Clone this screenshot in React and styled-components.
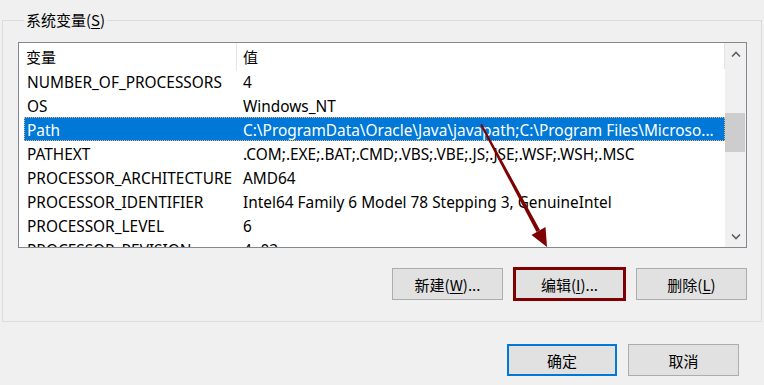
import React from "react";
import styled, { createGlobalStyle } from "styled-components";

const Global = createGlobalStyle`
  html, body { margin: 0; padding: 0; background: #f0f0f0; }
  body {
    width: 764px; height: 385px; overflow: hidden;
    font-family: "Noto Sans", "Noto Sans CJK SC", sans-serif;
    font-size: 15px; color: #000;
  }
`;

const Page = styled.div`
  position: relative;
  width: 764px;
  height: 385px;
  display: flex;
  flex-direction: column;
`;

const Group = styled.fieldset`
  margin: 10px 0 0 2px;
  width: 760px;
  box-sizing: border-box;
  height: 312px;
  padding: 12px 14px 0 15px;
  border: 1px solid #dcdcdc;
  display: flex;
  flex-direction: column;
  align-items: flex-start;
`;

const Legend = styled.legend`
  margin-left: 6px;
  padding: 0 2px 0 2px;
  line-height: 20px;
  font-family: "Noto Sans CJK SC", sans-serif;
  font-size: 15px;
`;

const U = styled.span`
  text-decoration: underline;
  text-underline-offset: 2px;
`;

const ListBox = styled.div`
  width: 729px;
  height: 206px;
  box-sizing: border-box;
  border: 1px solid #828790;
  background: #fff;
  display: flex;
  overflow: hidden;
`;

const ListContent = styled.div`
  flex: 1;
  display: flex;
  flex-direction: column;
  overflow: hidden;
`;

const Header = styled.div`
  flex: none;
  height: 26px;
  display: grid;
  grid-template-columns: 218px 1fr;
  border-right: 1px solid #e5e5e5;
`;

const HeadCell = styled.div`
  padding-left: ${p => p.$pad}px;
  line-height: 28px;
  font-family: "Noto Sans CJK SC", sans-serif;
  border-right: ${p => (p.$sep ? "1px solid #e5e5e5" : "none")};
`;

const Row = styled.div`
  flex: none;
  height: 24px;
  margin-left: 5px;
  box-sizing: border-box;
  display: grid;
  grid-template-columns: 213px 1fr;
  align-items: center;
  font-size: 15.4px;
  padding-top: 3px;
  background: ${p => (p.$sel ? "#0078d7" : "transparent")};
  color: ${p => (p.$sel ? "#fff" : "#000")};
  outline: ${p => (p.$sel ? "1px dotted #f3b36a" : "none")};
  outline-offset: -1px;
  white-space: nowrap;
`;

const Cell = styled.div`
  padding-left: ${p => p.$pad}px;
  overflow: hidden;
  white-space: nowrap;
`;

const Scrollbar = styled.div`
  flex: none;
  width: 21px;
  background: #f0f0f0;
  display: flex;
  flex-direction: column;
  align-items: center;
`;

const ArrowBtn = styled.div`
  flex: none;
  width: 21px;
  height: 21px;
  display: flex;
  align-items: center;
  justify-content: center;
`;

const Track = styled.div`
  flex: 1;
  width: 100%;
  display: flex;
  flex-direction: column;
`;

const Thumb = styled.div`
  margin: 49px 1px 0 0;
  width: 20px;
  height: 39px;
  background: #cdcdcd;
`;

const ButtonRow = styled.div`
  align-self: flex-end;
  margin: 20px 0 0 0;
  display: flex;
  gap: 11px;
`;

const Button = styled.button`
  width: ${p => p.$w || 111}px;
  height: 32px;
  box-sizing: border-box;
  background: #e1e1e1;
  border: 1px solid #adadad;
  border-radius: 0;
  padding: 0;
  font-family: "Noto Sans CJK SC", sans-serif;
  font-size: 15px;
  color: #000;
  ${p => p.$primary && "border: 2px solid #0078d7;"}
  ${p => p.$marked && "outline: 3px solid #7f0000; outline-offset: -2px;"}
`;

const Footer = styled.div`
  display: flex;
  justify-content: flex-end;
  gap: 11px;
  padding: 22px 25px 0 0;
`;

const Annotation = styled.svg`
  position: absolute;
  left: 0;
  top: 0;
  pointer-events: none;
`;

const rows = [
  ["NUMBER_OF_PROCESSORS", "4"],
  ["OS", "Windows_NT"],
  ["Path", "C:\\ProgramData\\Oracle\\Java\\javapath;C:\\Program Files\\Microso...", true],
  ["PATHEXT", ".COM;.EXE;.BAT;.CMD;.VBS;.VBE;.JS;.JSE;.WSF;.WSH;.MSC"],
  ["PROCESSOR_ARCHITECTURE", "AMD64"],
  ["PROCESSOR_IDENTIFIER", "Intel64 Family 6 Model 78 Stepping 3, GenuineIntel"],
  ["PROCESSOR_LEVEL", "6"],
  ["PROCESSOR_REVISION", "4e03"],
];

function Chevron({ up }) {
  return (
    <svg width="10" height="6" viewBox="0 0 10 6">
      <path
        d={up ? "M1 5.5 L5 1.5 L9 5.5" : "M1 0.5 L5 4.5 L9 0.5"}
        fill="none"
        stroke="#606060"
        strokeWidth="1.6"
      />
    </svg>
  );
}

export default function App() {
  return (
    <Page>
      <Global />
      <Group>
        <Legend>
          系统变量(<U>S</U>)
        </Legend>
        <ListBox>
          <ListContent>
            <Header>
              <HeadCell $pad={7} $sep>变量</HeadCell>
              <HeadCell $pad={6}>值</HeadCell>
            </Header>
            {rows.map(([name, value, sel]) => (
              <Row key={name} $sel={sel}>
                <Cell $pad={3}>{name}</Cell>
                <Cell $pad={6}>{value}</Cell>
              </Row>
            ))}
          </ListContent>
          <Scrollbar>
            <ArrowBtn>
              <Chevron up />
            </ArrowBtn>
            <Track>
              <Thumb />
            </Track>
            <ArrowBtn>
              <Chevron />
            </ArrowBtn>
          </Scrollbar>
        </ListBox>
        <ButtonRow>
          <Button>
            新建(<U>W</U>)...
          </Button>
          <Button $marked>
            编辑(<U>I</U>)...
          </Button>
          <Button>
            删除(<U>L</U>)
          </Button>
        </ButtonRow>
      </Group>
      <Footer>
        <Button $primary $w={110}>确定</Button>
        <Button $w={111}>取消</Button>
      </Footer>
      <Annotation width="764" height="385" viewBox="0 0 764 385">
        <polygon points="480.2,125 482,124 540,230 536.5,232" fill="#7f0000" />
        <polygon points="547,247 531.5,235 545.5,227" fill="#7f0000" />
      </Annotation>
    </Page>
  );
}
